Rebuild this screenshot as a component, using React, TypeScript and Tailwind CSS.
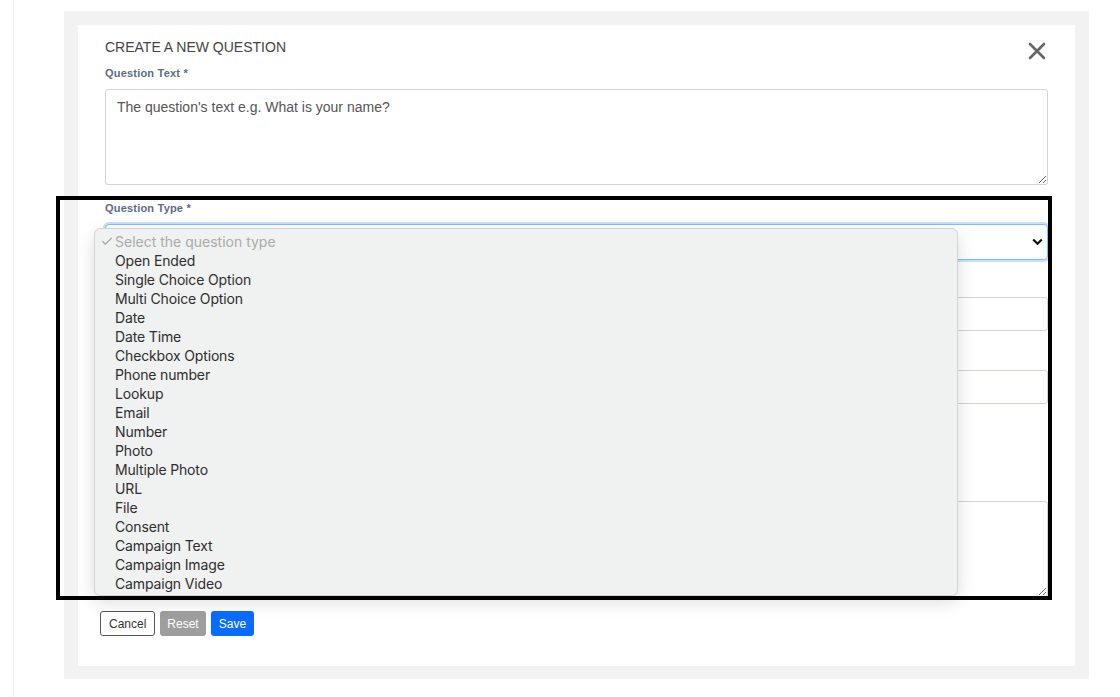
import { Check } from 'lucide-react';

const options = [
  'Open Ended', 'Single Choice Option', 'Multi Choice Option', 'Date', 'Date Time',
  'Checkbox Options', 'Phone number', 'Lookup', 'Email', 'Number', 'Photo',
  'Multiple Photo', 'URL', 'File', 'Consent', 'Campaign Text', 'Campaign Image', 'Campaign Video',
];

const labelCls = 'block text-[11px] font-bold text-[#5b6b86] leading-[13px] tracking-[0.2px]';
const boxCls = 'block w-full border border-[#cfd4dc] rounded-[3px] bg-white';

export default function App() {
  return (
    <div className="min-h-[697px] bg-white font-['Liberation_Sans',Arial,sans-serif] pl-[13px]">
      <div className="border-l border-[#ececec] min-h-[697px] pl-[50px] pt-[11px]">
        <div className="w-[1025px] h-[668px] bg-[#f2f2f2] p-[14px] pb-[13px]">
          <div className="relative bg-white h-full px-[27px] pt-[14px]">
            <div className="flex items-start justify-between h-[17px]">
              <h2 className="text-[14px] leading-[17px] text-[#444] uppercase">Create a new question</h2>
              <svg width="18" height="18" viewBox="0 0 18 18" className="mt-[3px] mr-[2px] shrink-0">
                <path d="M2 2 L16 16 M16 2 L2 16" stroke="#666" strokeWidth="2.6" strokeLinecap="round" />
              </svg>
            </div>

            <label className={`${labelCls} mt-[11px]`}>Question Text *</label>
            <textarea
              readOnly
              placeholder="The question's text e.g. What is your name?"
              className={`${boxCls} h-[96px] mt-[9px] px-[11px] py-[8px] text-[14px] leading-[18px] resize-y placeholder:text-[#555] placeholder:opacity-100 outline-none`}
            />

            <label className={`${labelCls} mt-[17px]`}>Question Type *</label>
            <div className="relative mt-[9px]">
              <div className="h-[36px] w-[943px] rounded-[4px] border border-[#80bdff] shadow-[0_0_0_2px_rgba(128,189,255,0.45)] bg-white flex items-center justify-end pr-[4px]">
                <svg width="11" height="8" viewBox="0 0 11 8">
                  <path d="M1.2 1.5 L5.5 5.8 L9.8 1.5" stroke="#111" strokeWidth="2.2" fill="none" />
                </svg>
              </div>

              {/* fields hidden behind the open dropdown */}
              <div className={`${boxCls} h-[34px] mt-[37px]`} />
              <div className={`${boxCls} h-[34px] mt-[39px]`} />
              <div className="h-[97px]" />
              <textarea readOnly className={`${boxCls} h-[96px] resize-y outline-none`} />

              <div className="absolute left-[-11px] top-[4px] w-[864px] h-[368px] rounded-[6px] border border-[#d4d4d4] bg-[#f0f1f1] shadow-[0_6px_18px_rgba(0,0,0,0.14)] pt-[3px] font-['Inter','Noto_Sans',sans-serif] flex flex-col">
                <div className="flex items-center h-[19px] text-[14px] text-[#ababab]">
                  <Check size={13} strokeWidth={2.2} className="w-[20px] pl-[4px] text-[#a8a8a8]" />
                  Select the question type
                </div>
                {options.map(o => (
                  <div key={o} className="flex items-center h-[19px] pl-[20px] text-[14px] text-[#2e2e2e] tracking-[-0.15px]">
                    {o}
                  </div>
                ))}
              </div>
            </div>

            <div className="flex gap-[5px] mt-[14px] ml-[-5px]">
              <button className="h-[25px] px-[8px] border border-[#555] rounded-[3px] bg-white text-[12px] text-[#333]">Cancel</button>
              <button className="h-[25px] px-[7px] rounded-[3px] bg-[#9e9e9e] text-[12px] text-white">Reset</button>
              <button className="h-[25px] px-[8px] rounded-[3px] bg-[#0a6cff] text-[12px] text-white">Save</button>
            </div>

            <div className="absolute left-[-22px] top-[171px] w-[996px] h-[404px] border-[4px] border-black pointer-events-none" />
          </div>
        </div>
      </div>
    </div>
  );
}
